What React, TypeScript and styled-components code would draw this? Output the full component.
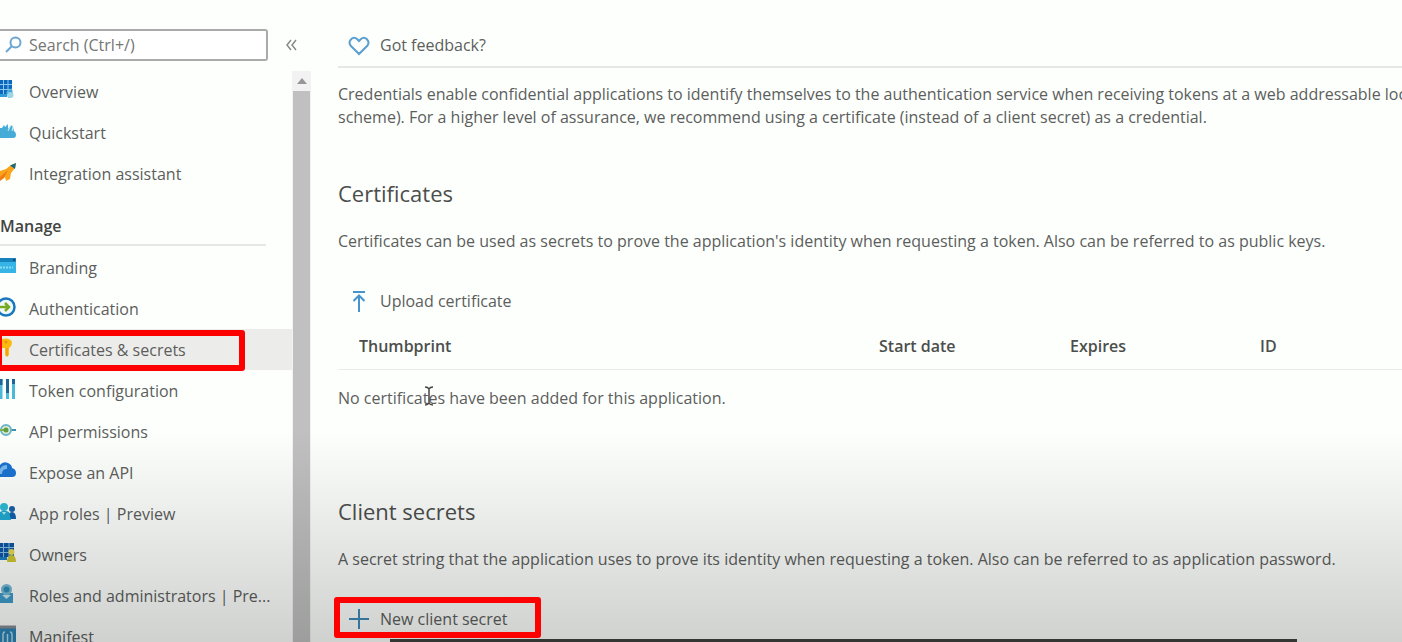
import React from "react";
import styled, { createGlobalStyle, css } from "styled-components";

const GlobalStyle = createGlobalStyle`
  * { box-sizing: border-box; }
  body {
    margin: 0;
    background: #fdfffd;
    color: #5c5e5c;
    font-family: "Open Sans", "Noto Sans", sans-serif;
    font-size: 16px;
    line-height: 23px;
  }
`;

const Shell = styled.div`
  position: relative;
  display: grid;
  grid-template-columns: 311px minmax(0, 1fr);
  height: 100vh;
  overflow: hidden;
`;

const Shade = styled.div`
  position: absolute;
  inset: 67% 0 0 0;
  background: linear-gradient(rgba(0, 0, 0, 0), rgba(0, 0, 0, 0.18));
  pointer-events: none;
  z-index: 1;
`;

const PlayerEdge = styled.div`
  position: absolute;
  left: 390px;
  right: 105px;
  bottom: 0;
  height: 3px;
  background: #343634;
  z-index: 2;
`;

const Highlight = styled.span<{ $kind: "nav" | "command" }>`
  position: absolute;
  border: 6px solid #fe0000;
  border-radius: 3px;
  pointer-events: none;
  z-index: 3;
  ${({ $kind }) =>
    $kind === "nav"
      ? css`
          inset: 1px 47px -1px -4px;
        `
      : css`
          inset: -2px -34px 1px -4px;
        `}
`;

const Sidebar = styled.aside`
  display: flex;
  flex-direction: column;
  min-height: 0;
`;

const SearchRow = styled.div`
  display: flex;
  align-items: center;
  gap: 15px;
  padding: 29px 10px 10px 0;
`;

const SearchBox = styled.label`
  display: flex;
  align-items: center;
  gap: 7px;
  flex: 1;
  height: 32px;
  padding-left: 5px;
  background: #fff;
  border: 2px solid #a9aaa9;
  border-left: 0;
  border-radius: 0 3px 3px 0;
`;

const SearchInput = styled.input`
  flex: 1;
  min-width: 0;
  padding: 1px 0 0;
  border: 0;
  outline: 0;
  background: transparent;
  color: inherit;
  font: inherit;
  &::placeholder {
    color: #747674;
    opacity: 1;
  }
`;

const IconButton = styled.button`
  display: flex;
  padding: 0;
  border: 0;
  background: none;
  color: #888;
`;

const MenuArea = styled.div`
  display: grid;
  grid-template-columns: minmax(0, 1fr) 19px;
  flex: 1;
  min-height: 0;
`;

const Menu = styled.nav`
  overflow: hidden;
`;

const MenuList = styled.ul`
  margin: 0;
  padding: 0;
  list-style: none;
`;

const GroupTitle = styled.h2`
  margin: 0 26px 1px 0;
  padding: 21px 0 6px;
  border-bottom: 2px solid #e6e7e6;
  color: #434543;
  font-size: 16px;
  font-weight: 600;
  line-height: 23px;
`;

const MenuItem = styled.li<{ $selected?: boolean }>`
  position: relative;
  background: ${({ $selected }) => ($selected ? "#ececeb" : "transparent")};
`;

const MenuLink = styled.a`
  display: flex;
  align-items: center;
  gap: 13px;
  height: 41px;
  padding-top: 2px;
  color: inherit;
  text-decoration: none;
  white-space: nowrap;
  svg {
    flex: none;
    margin-bottom: 5px;
  }
`;

const Track = styled.div`
  display: flex;
  flex-direction: column;
  background: #f1f2f1;
`;

const TrackArrow = styled.div`
  display: flex;
  align-items: center;
  justify-content: center;
  height: 20px;
`;

const Thumb = styled.div`
  flex: 1;
  margin: 0 1px;
  background: #bfc0bf;
`;

const Main = styled.main`
  min-width: 0;
  padding-left: 27px;
  overflow: hidden;
`;

const Toolbar = styled.div`
  display: flex;
  align-items: center;
  height: 68px;
  padding-top: 24px;
  border-bottom: 2px solid #e6e7e6;
`;

const Command = styled.button`
  position: relative;
  display: flex;
  align-items: center;
  gap: 10px;
  height: 40px;
  padding: 1px 0 0 10px;
  border: 0;
  background: none;
  color: inherit;
  font: inherit;
  white-space: nowrap;
`;

const Intro = styled.p`
  margin: 15px 0 0;
  white-space: nowrap;
`;

const Section = styled.section<{ $gap: number }>`
  margin-top: ${({ $gap }) => $gap}px;
`;

const Title = styled.h1`
  margin: 0;
  color: #4c4e4c;
  font-size: 22px;
  font-weight: 400;
  line-height: 30px;
`;

const Text = styled.p`
  margin: 22px 0 28px;
  white-space: nowrap;
`;

const Table = styled.table`
  width: 100%;
  table-layout: fixed;
  border-collapse: collapse;
`;

const Th = styled.th<{ $width: string }>`
  width: ${({ $width }) => $width};
  height: 48px;
  padding: 4px 0 0 21px;
  border-bottom: 1px solid #eaebea;
  color: #4c4e4c;
  font-weight: 600;
  text-align: left;
`;

const Td = styled.td`
  position: relative;
  padding: 17px 0 0;
`;

const Cursor = styled.svg`
  position: absolute;
  left: 86px;
  top: 16px;
`;

const Icon = ({ children }: { children: React.ReactNode }) => (
  <svg width="16" height="20" viewBox="0 0 16 20" fill="none" aria-hidden="true">
    {children}
  </svg>
);

const icons = {
  overview: (
    <Icon>
      <path d="M0 0h12v14H0z" fill="#0c68bd" />
      <path d="M3.500 0v14M8 0v14M0 4.500h12M0 9.500h12" stroke="#8cc9ef" />
      <path d="M0 14h7v3H0z" fill="#2f9bd8" />
      <path d="M6 12l6-4 1 5-2 5H8z" fill="#54b8dd" opacity=".75" />
      <circle cx="10.500" cy="15" r="3" fill="#9bd5e7" />
    </Icon>
  ),
  quickstart: (
    <Icon>
      <path d="M0 7h2l2-3 1 2 3-3v5l3-4 2 2 1 4q2 1 2 4 0 3-3 3H0z" fill="#45abd7" />
      <path d="M8 10l3-6M13 6l-1 4" stroke="#d3eff7" />
    </Icon>
  ),
  rocket: (
    <Icon>
      <path d="M0 9l6-2 5-4 5-2-1 5-4 5-1 6-4 2-1-4-5 3z" fill="#fba51c" />
      <path d="M0 15l8-7-4 8-4 3z" fill="#f27c12" />
      <path d="M10 3.500L16 1l-1 6z" fill="#176b83" />
    </Icon>
  ),
  branding: (
    <Icon>
      <path d="M0 2h16v15H0z" fill="#35b4e5" />
      <path d="M0 2h16v4H0z" fill="#1683bd" />
      <path d="M13 3h2v2h-2z" fill="#17466d" />
      <path d="M0 11.500h13" stroke="#8bdcf3" strokeWidth="2" strokeDasharray="2 1" />
    </Icon>
  ),
  auth: (
    <Icon>
      <circle cx="6" cy="10" r="8.500" fill="#eff8fa" stroke="#1878bd" strokeWidth="2.500" />
      <path d="M0 10h8M5 6l4 4-4 4" stroke="#76aa22" strokeWidth="2.500" />
    </Icon>
  ),
  key: (
    <Icon>
      <path d="M2 1q8-2 10 3 0 4-3 6v7l-2 2-2-2v-7H2z" fill="#fdbb12" />
      <path d="M7 10v8" stroke="#f29a0c" strokeWidth="1.500" />
      <circle cx="6" cy="4" r="1.500" fill="#ed920d" />
    </Icon>
  ),
  token: (
    <Icon>
      <path d="M1 0v20M7.500 0v20M13.500 0v20" stroke="#4ab9d8" strokeWidth="3" />
      <path d="M1 0v6M7.500 0v14M13.500 0v5" stroke="#1d6598" strokeWidth="3" />
    </Icon>
  ),
  permissions: (
    <Icon>
      <path d="M11 10h5" stroke="#3990b1" strokeWidth="2" />
      <circle cx="6" cy="10" r="5" fill="#d9edda" stroke="#70b4c8" strokeWidth="2" />
      <path d="M0 10h4" stroke="#80b34c" strokeWidth="2" />
      <circle cx="6" cy="10" r="2.500" fill="#619c3e" />
    </Icon>
  ),
  cloud: (
    <Icon>
      <path d="M0 4Q3 0 8 2q4 2 4 5 4 1 4 5 0 4-4 4H0z" fill="#1b73d2" />
      <path d="M0 8q2-4 7-4v4q-5 0-5 5H0z" fill="#79b9ed" />
    </Icon>
  ),
  roles: (
    <Icon>
      <circle cx="12" cy="7" r="3" fill="#1662a7" />
      <path d="M8 17q0-7 4-7t4 7z" fill="#1260ad" />
      <circle cx="4" cy="5" r="4" fill="#2ebbd5" />
      <path d="M0 10q4-3 9 0l2 8H0z" fill="#20a9d2" />
      <path d="M2 10l2 3 2-3z" fill="#b4e9f0" />
    </Icon>
  ),
  owners: (
    <Icon>
      <path d="M0 0h14v14H0z" fill="#0d55a3" />
      <path d="M3.500 0v14M9 0v14M0 4.500h14M0 9.500h14" stroke="#83bce5" />
      <path d="M0 14h7v3H0z" fill="#1b7fc4" />
      <circle cx="11.500" cy="9" r="3" fill="#e4d854" />
      <path d="M7 19q0-7 4.500-7t4.500 7z" fill="#cec532" />
    </Icon>
  ),
  admin: (
    <Icon>
      <path d="M0 9h13v10H0z" fill="#3e9ac9" />
      <circle cx="6.500" cy="5.500" r="5.500" fill="#75b9d5" />
      <circle cx="6.500" cy="5.500" r="3" fill="#308cb7" />
      <path d="M2 11l4.500 4 4.500-4z" fill="#c6e5ef" />
    </Icon>
  ),
  manifest: (
    <Icon>
      <path d="M0 1h16v19H0z" fill="#2c83b6" />
      <path d="M0 2h16" stroke="#858d93" strokeWidth="3" />
      <path d="M5 7q-2 0-2 3v7M10 7q2 0 2 3v7M7.500 9v8" stroke="#a8dced" strokeWidth="1.500" />
    </Icon>
  ),
};

type Entry = { label: string; icon: keyof typeof icons; selected?: boolean };

const topItems: Entry[] = [
  { label: "Overview", icon: "overview" },
  { label: "Quickstart", icon: "quickstart" },
  { label: "Integration assistant", icon: "rocket" },
];

const manageItems: Entry[] = [
  { label: "Branding", icon: "branding" },
  { label: "Authentication", icon: "auth" },
  { label: "Certificates & secrets", icon: "key", selected: true },
  { label: "Token configuration", icon: "token" },
  { label: "API permissions", icon: "permissions" },
  { label: "Expose an API", icon: "cloud" },
  { label: "App roles | Preview", icon: "roles" },
  { label: "Owners", icon: "owners" },
  { label: "Roles and administrators | Pre...", icon: "admin" },
  { label: "Manifest", icon: "manifest" },
];

const MenuGroup = ({ items }: { items: Entry[] }) => (
  <MenuList>
    {items.map(({ label, icon, selected }) => (
      <MenuItem key={label} $selected={selected}>
        <MenuLink href="#" aria-current={selected ? "page" : undefined}>
          {icons[icon]}
          {label}
        </MenuLink>
        {selected && <Highlight $kind="nav" />}
      </MenuItem>
    ))}
  </MenuList>
);

export default function App() {
  return (
    <>
      <GlobalStyle />
      <Shell>
        <Sidebar>
          <SearchRow>
            <SearchBox>
              <svg width="17" height="18" viewBox="0 0 17 18" fill="none" stroke="#6ba6d2" strokeWidth="2" aria-hidden="true">
                <circle cx="10.500" cy="6.500" r="5" />
                <path d="M7 10L1 16" />
              </svg>
              <SearchInput type="search" aria-label="Search" placeholder="Search (Ctrl+/)" />
            </SearchBox>
            <IconButton type="button" aria-label="Collapse menu">
              <svg width="18" height="12" viewBox="0 0 18 12" fill="none" stroke="currentColor" strokeWidth="1.500">
                <path d="M8 1L4 6l4 5M13 1L9 6l4 5" />
              </svg>
            </IconButton>
          </SearchRow>
          <MenuArea>
            <Menu aria-label="Application">
              <MenuGroup items={topItems} />
              <GroupTitle>Manage</GroupTitle>
              <MenuGroup items={manageItems} />
            </Menu>
            <Track>
              <TrackArrow>
                <svg width="10" height="6" viewBox="0 0 10 6" aria-hidden="true">
                  <path d="M0 6l5-6 5 6z" fill="#969796" />
                </svg>
              </TrackArrow>
              <Thumb />
            </Track>
          </MenuArea>
        </Sidebar>

        <Main>
          <Toolbar>
            <Command type="button">
              <svg width="22" height="20" viewBox="0 0 22 20" fill="none" stroke="#5a9fd0" strokeWidth="2" aria-hidden="true">
                <path d="M11 18L2.500 9.500C-.5 5 5-.5 9 3l2 2 2-2c4-3.500 9.500 2 6.500 6.500z" />
              </svg>
              Got feedback?
            </Command>
          </Toolbar>
          <Intro>
            Credentials enable confidential applications to identify themselves to the authentication service when receiving tokens at a web addressable loca
            <br />
            scheme). For a higher level of assurance, we recommend using a certificate (instead of a client secret) as a credential.
          </Intro>

          <Section $gap={49}>
            <Title>Certificates</Title>
            <Text>
              Certificates can be used as secrets to prove the application's identity when requesting a token. Also can be referred to as public keys.
            </Text>
            <Command type="button">
              <svg width="22" height="22" viewBox="0 0 22 22" fill="none" stroke="#4594cd" strokeWidth="2" aria-hidden="true">
                <path d="M5 1h12M11 21V5M5.500 10L11 4.500l5.500 5.500" />
              </svg>
              Upload certificate
            </Command>
            <Table>
              <thead>
                <tr>
                  <Th $width="auto">Thumbprint</Th>
                  <Th $width="191px">Start date</Th>
                  <Th $width="190px">Expires</Th>
                  <Th $width="163px">ID</Th>
                </tr>
              </thead>
              <tbody>
                <tr>
                  <Td colSpan={4}>
                    No certificates have been added for this application.
                    <Cursor width="10" height="20" viewBox="0 0 10 20" fill="none" stroke="#444" strokeWidth="1.500" aria-hidden="true">
                      <path d="M1 1q3 0 4 2 1-2 4-2M5 3v14M1 19q3 0 4-2 1 2 4 2" />
                    </Cursor>
                  </Td>
                </tr>
              </tbody>
            </Table>
          </Section>

          <Section $gap={86}>
            <Title>Client secrets</Title>
            <Text>
              A secret string that the application uses to prove its identity when requesting a token. Also can be referred to as application password.
            </Text>
            <Command type="button">
              <svg width="22" height="20" viewBox="0 0 22 20" fill="none" stroke="#3f8bb9" strokeWidth="2" aria-hidden="true">
                <path d="M1 10h20M11 0v20" />
              </svg>
              New client secret
              <Highlight $kind="command" />
            </Command>
          </Section>
        </Main>
        <Shade />
        <PlayerEdge />
      </Shell>
    </>
  );
}
